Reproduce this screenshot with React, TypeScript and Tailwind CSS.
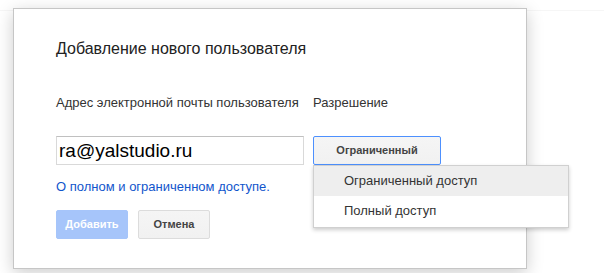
import { useState } from 'react'

const font = { fontFamily: '"Liberation Sans", Arial, sans-serif' }

export default function App() {
  const [email] = useState('ra@yalstudio.ru')

  return (
    <div className="min-h-screen bg-white" style={font}>
      {/* faint page rule behind the dialog */}
      <div className="pt-[10px]">
        <div className="border-t border-[#f6f6f6]" />
      </div>

      {/* ── dialog ── */}
      <div className="ml-[13px] -mt-[3px] w-[514px] h-[261px] bg-white border border-[#c6c6c6] shadow-[0_4px_16px_rgba(0,0,0,0.2)] px-[42px] pt-[31px]">
        <div className="text-[16px] leading-[18px] text-[#222]">Добавление нового пользователя</div>

        <div className="mt-[37px] flex text-[13px] leading-[15px] text-[#333]">
          <div className="w-[257px]">Адрес электронной почты пользователя</div>
          <div>Разрешение</div>
        </div>

        <div className="mt-[26px] flex gap-[9px]">
          <input
            value={email}
            readOnly
            className="w-[248px] h-[29px] border border-[#d9d9d9] border-t-[#c0c0c0] px-[2px] text-[19px] text-black outline-none"
          />
          <div className="relative">
            <button className="w-[128px] h-[29px] rounded-[2px] border border-[#4d90fe] bg-gradient-to-b from-[#f5f5f5] to-[#f1f1f1] text-[11px] font-bold text-[#444]">
              Ограниченный
            </button>
            {/* выпадающее меню */}
            <div className="absolute left-0 top-full w-[256px] bg-white border border-[#d0d0d0] shadow-[0_2px_4px_rgba(0,0,0,0.2)] pb-[1px] text-[13px] text-[#333] z-10">
              <div className="h-[30px] flex items-center pl-[30px] bg-[#eeeeee]">Ограниченный доступ</div>
              <div className="h-[30px] flex items-center pl-[30px]">Полный доступ</div>
            </div>
          </div>
        </div>

        <div className="mt-[14px] text-[13px] leading-[15px]">
          <a href="#" className="text-[#15c] no-underline">О полном и ограниченном доступе.</a>
        </div>

        <div className="mt-[16px] flex gap-[10px]">
          <button
            disabled
            className="h-[29px] min-w-[72px] px-[8px] rounded-[2px] border border-[#a6c5fa] bg-[#a6c5fa] text-[11px] font-bold text-white"
          >
            Добавить
          </button>
          <button className="h-[29px] min-w-[72px] px-[8px] rounded-[2px] border border-[#dcdcdc] bg-gradient-to-b from-[#f5f5f5] to-[#f1f1f1] text-[11px] font-bold text-[#444]">
            Отмена
          </button>
        </div>
      </div>
    </div>
  )
}
